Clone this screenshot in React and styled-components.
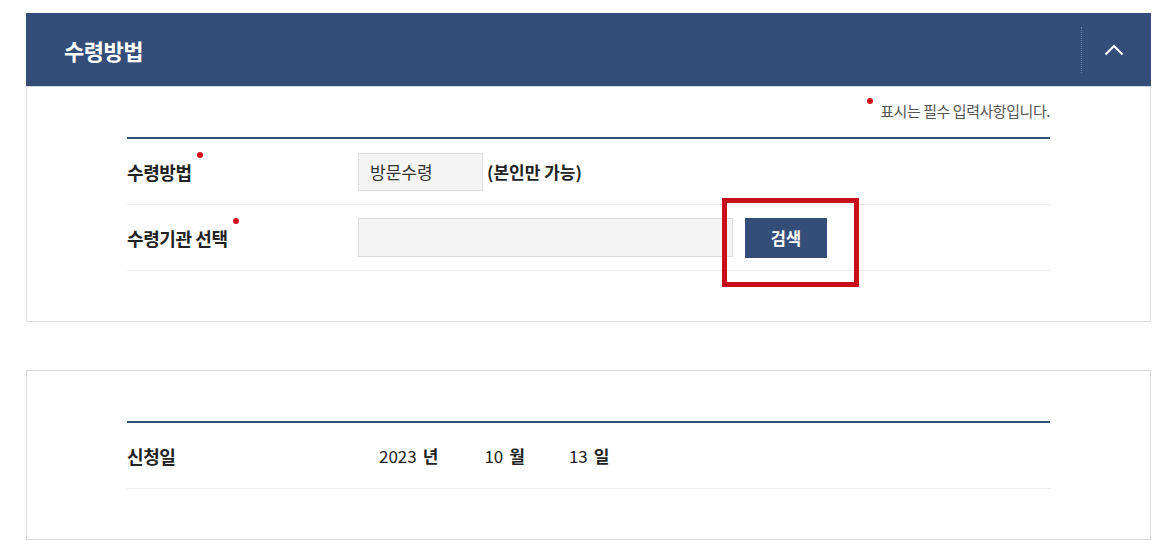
import React from "react";
import styled, { createGlobalStyle } from "styled-components";

const Global = createGlobalStyle`
  html, body { margin: 0; padding: 0; background: #fff; }
  body { font-family: "Noto Sans CJK KR", "Noto Sans", sans-serif; color: #222; }
  * { box-sizing: border-box; }
`;

const Page = styled.div`
  padding: 13px 22px 20px 26px;
  display: flex;
  flex-direction: column;
  gap: 48px;
`;

const Panel = styled.section`
  width: 1125px;
`;

const Header = styled.div`
  height: 73px;
  background: #344d79;
  display: flex;
  align-items: center;
  padding-left: 38px;
`;

const Title = styled.h2`
  flex: 1;
  margin: 0;
  color: #fff;
  font-size: 22px;
  font-weight: 700;
  letter-spacing: -0.5px;
`;

const Toggle = styled.button`
  width: 70px;
  height: 46px;
  border: 0;
  border-left: 1px dotted #6a7ea3;
  background: transparent;
  display: flex;
  align-items: center;
  justify-content: center;
  padding: 0 5px 0 0;
  cursor: pointer;
`;

const Body = styled.div`
  border: 1px solid #dcdcdc;
  border-top: 1px solid #d6d6d6;
  padding: ${(p) => (p.$withNote ? "0" : "50px")} 100px 50px;
`;

const Note = styled.p`
  margin: 0;
  height: 50px;
  display: flex;
  justify-content: flex-end;
  align-items: center;
  padding-bottom: 4px;
  font-size: 15px;
  color: #555;
  letter-spacing: -0.45px;
`;

const Dot = styled.span`
  display: inline-block;
  width: 6px;
  height: 6px;
  border-radius: 50%;
  background: #d3131b;
  margin: ${(p) => p.$m || "0"};
  transform: translateY(${(p) => p.$up || 0}px);
`;

const Table = styled.div`
  border-top: 2px solid #344d79;
`;

const Row = styled.div`
  height: 66px;
  border-bottom: 1px solid #ececec;
  display: grid;
  grid-template-columns: 231px 1fr;
  align-items: center;
`;

const Label = styled.div`
  font-size: 18px;
  font-weight: 700;
  color: #222;
  display: flex;
  align-items: center;
  letter-spacing: -0.4px;
`;

const Value = styled.div`
  display: flex;
  align-items: center;
  gap: ${(p) => p.$gap || "4px"};
  position: relative;
`;

const Field = styled.div`
  width: ${(p) => p.$w}px;
  height: ${(p) => p.$h || 38}px;
  background: #f4f4f4;
  border: 1px solid #dddddd;
  font-size: 17px;
  color: #333;
  display: flex;
  align-items: center;
  padding-left: 11px;
`;

const Strong = styled.span`
  font-size: 17px;
  font-weight: 700;
  color: #222;
`;

const SearchButton = styled.button`
  width: 82px;
  height: 40px;
  background: #344d79;
  color: #fff;
  border: 0;
  font-family: inherit;
  font-size: 16.5px;
  font-weight: 700;
  margin-left: 12px;
`;

const Highlight = styled.div`
  position: absolute;
  left: 364px;
  top: -20px;
  width: 137px;
  height: 89px;
  border: 5px solid #c8101a;
  pointer-events: none;
`;

const DatePart = styled.span`
  font-size: 17px;
  color: #222;
  margin-left: ${(p) => p.$ml}px;
  display: inline-flex;
  align-items: baseline;
  gap: 6px;
  b { font-weight: 700; }
`;

export default function App() {
  return (
    <>
      <Global />
      <Page>
        <Panel>
          <Header>
            <Title>수령방법</Title>
            <Toggle aria-label="접기">
              <svg width="20" height="12" viewBox="0 0 20 12">
                <polyline points="1.5,10.5 10,2 18.5,10.5" fill="none" stroke="#fff" strokeWidth="2" />
              </svg>
            </Toggle>
          </Header>
          <Body $withNote>
            <Note>
              <Dot $m="0 7px 0 0" $up={-9} />
              표시는 필수 입력사항입니다.
            </Note>
            <Table>
              <Row>
                <Label>
                  수령방법
                  <Dot $m="0 0 0 5px" $up={-17} />
                </Label>
                <Value>
                  <Field $w={125}>방문수령</Field>
                  <Strong>(본인만 가능)</Strong>
                </Value>
              </Row>
              <Row>
                <Label>
                  수령기관 선택
                  <Dot $m="0 0 0 5px" $up={-17} />
                </Label>
                <Value $gap="0">
                  <Field $w={375} $h={39} />
                  <SearchButton>검색</SearchButton>
                  <Highlight />
                </Value>
              </Row>
            </Table>
          </Body>
        </Panel>
        <Panel>
          <Body>
            <Table>
              <Row>
                <Label>신청일</Label>
                <Value $gap="0">
                  <DatePart $ml={21}>2023<b>년</b></DatePart>
                  <DatePart $ml={46}>10<b>월</b></DatePart>
                  <DatePart $ml={44}>13<b>일</b></DatePart>
                </Value>
              </Row>
            </Table>
          </Body>
        </Panel>
      </Page>
    </>
  );
}
